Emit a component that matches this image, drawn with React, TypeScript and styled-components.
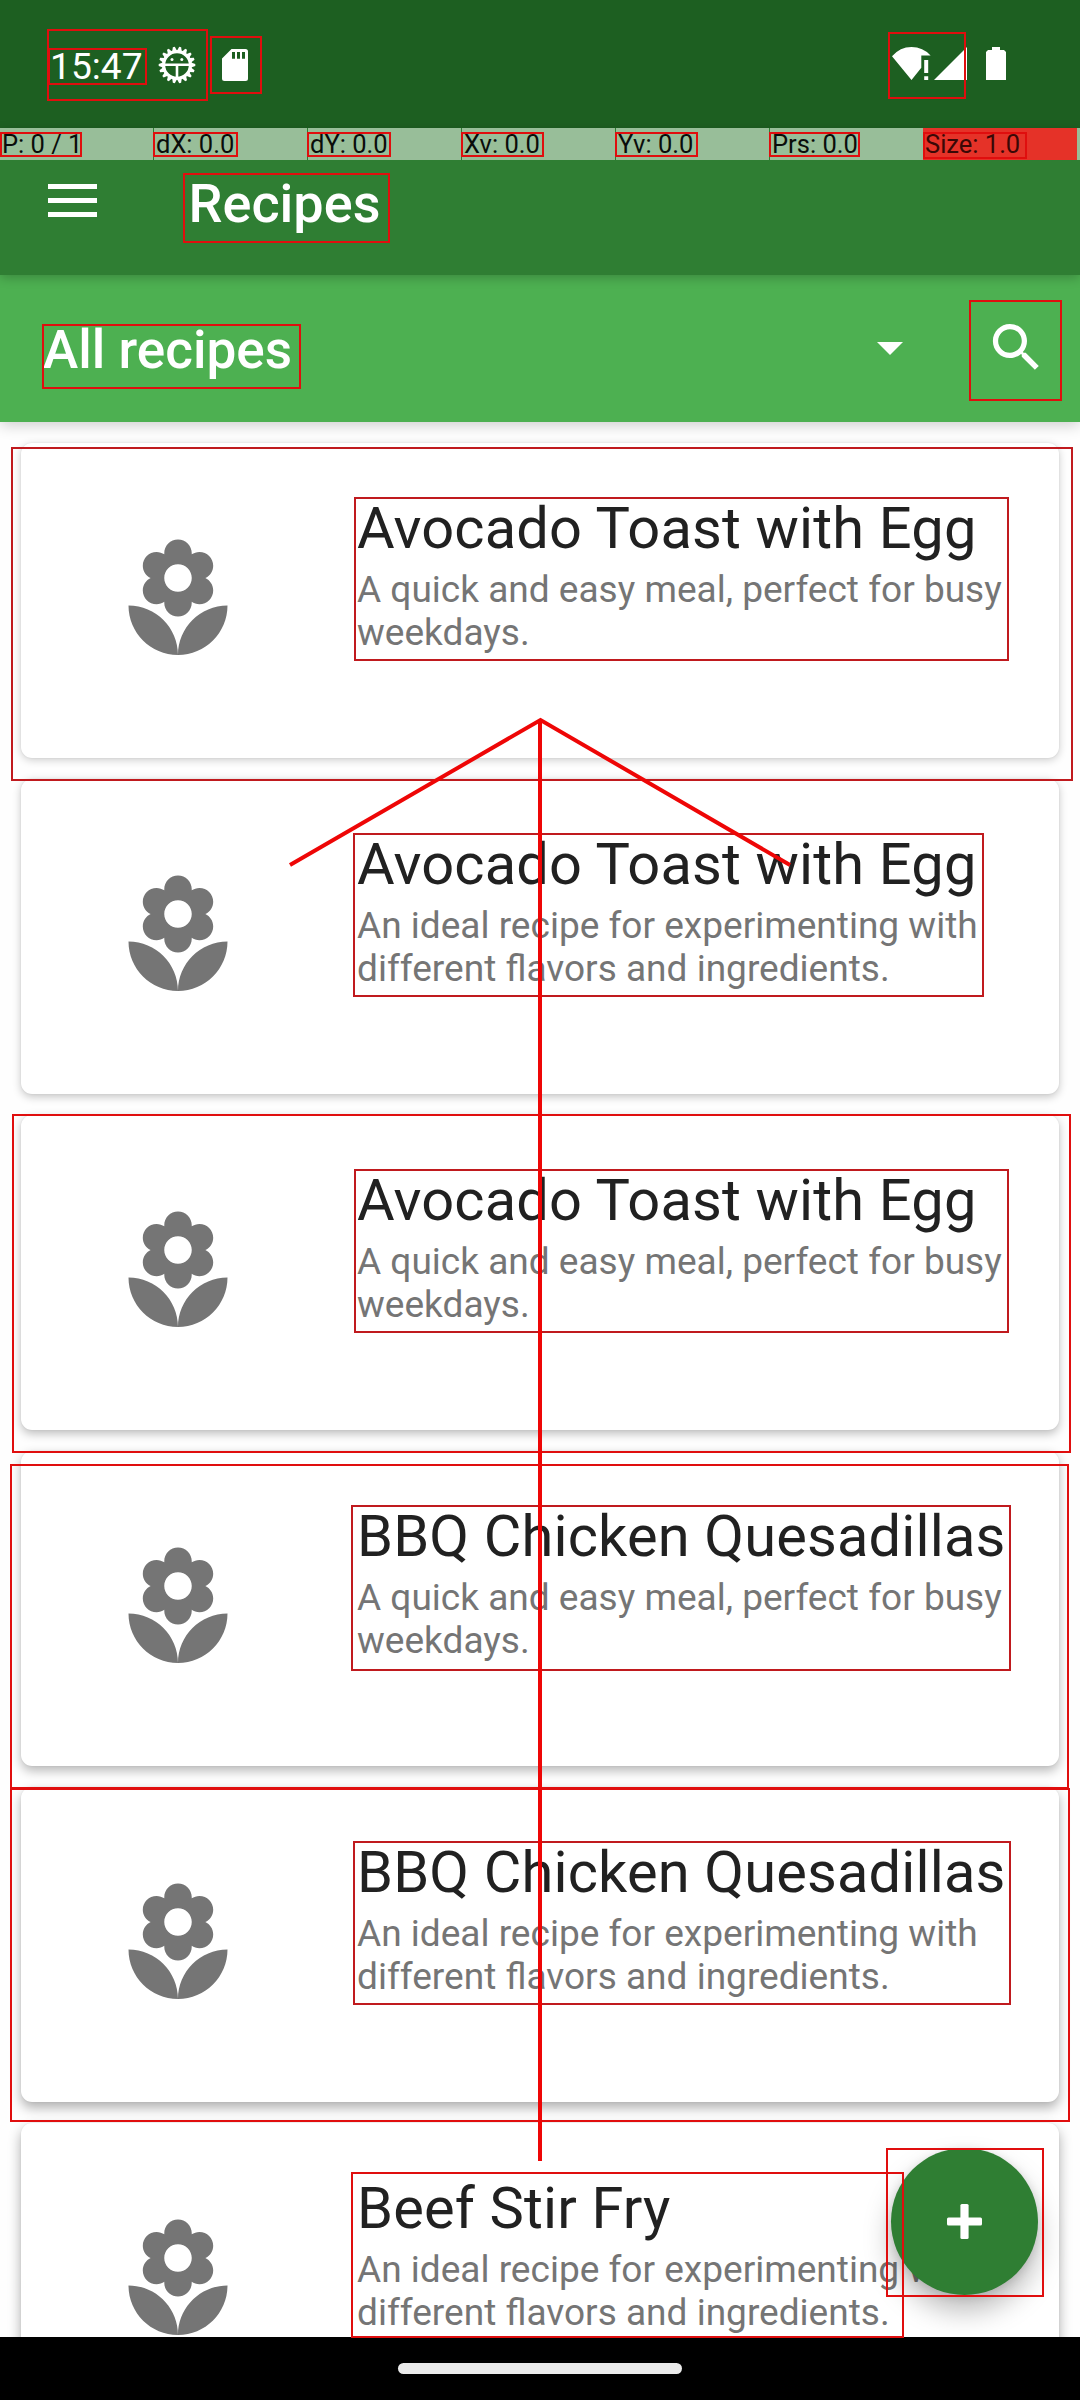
import React from "react";
import styled, { createGlobalStyle } from "styled-components";

const Global = createGlobalStyle`
  * { box-sizing: border-box; }
  html, body { margin: 0; padding: 0; background: #fff; }
  body { font-family: Roboto, "Noto Sans", sans-serif; }
`;

const Screen = styled.div`
  position: relative;
  width: 1080px;
  height: 2400px;
  overflow: hidden;
  display: flex;
  flex-direction: column;
  background: #fefefe;
`;

const StatusBar = styled.header`
  flex: none;
  height: 128px;
  display: flex;
  justify-content: space-between;
  padding: 40px 74px 0 50px;
  background: #1d5f21;
  color: #fff;
`;

const StatusGroup = styled.div`
  display: flex;
  align-items: flex-start;
  height: 50px;
`;

const Clock = styled.span`
  width: 107px;
  padding-top: 1px;
  font-size: 37.2px;
  line-height: 50px;
`;

const AppBar = styled.div`
  position: relative;
  z-index: 3;
  flex: none;
  height: 147px;
  display: flex;
  align-items: center;
  padding: 0 0 3px 39px;
  background: #2f7e33;
  color: #fff;
  box-shadow: 0 3px 10px rgba(0, 0, 0, 0.22);
`;

const AppTitle = styled.h1`
  margin: 7px 0 0 83.5px;
  font-size: 54px;
  font-weight: 500;
  line-height: 62px;
`;

const PointerStrip = styled.div`
  position: absolute;
  left: 0;
  top: 0;
  width: 1080px;
  height: 32px;
  display: flex;
  gap: 1px;
`;

const PointerCell = styled.div<{ $hot?: boolean }>`
  width: ${(p) => (p.$hot ? 154 : 153)}px;
  margin: ${(p) => (p.$hot ? "0 -1px 0 -1px" : "0")};
  padding-left: 2px;
  background: ${(p) => (p.$hot ? "#e53228" : "#98be99")};
  color: ${(p) => (p.$hot ? "#3a0806" : "#0a0d0a")};
  font-size: 25.5px;
  line-height: 32px;
  white-space: nowrap;
`;

const PointerRest = styled.div`
  flex: 1;
  background: #98be99;
`;

const FilterBar = styled.div`
  position: relative;
  z-index: 2;
  flex: none;
  height: 147px;
  display: flex;
  align-items: center;
  padding-left: 43px;
  background: #4db051;
  color: #fff;
  box-shadow: 0 3px 14px rgba(0, 0, 0, 0.2);
`;

const FilterName = styled.div`
  flex: 1;
  margin-top: 2px;
  font-size: 53.1px;
  font-weight: 500;
  line-height: 62px;
`;

const Caret = styled.div`
  width: 26px;
  height: 13px;
  margin-right: 82px;
  background: #fff;
  clip-path: polygon(0 0, 100% 0, 50% 100%);
`;

const SearchButton = styled.button`
  width: 63px;
  height: 63px;
  margin: 0 32px 3px 0;
  padding: 0;
  border: 0;
  background: none;
  color: #fff;
`;

const List = styled.main`
  flex: 1;
  min-height: 0;
  overflow: hidden;
  display: flex;
  flex-direction: column;
  gap: 21px;
  padding: 21px;
`;

const Card = styled.article<{ $depth: number }>`
  flex: none;
  height: 315px;
  display: grid;
  grid-template-columns: 315px 1fr;
  align-items: center;
  border-radius: 11px;
  background: #fff;
  box-shadow:
    0 ${(p) => 2 + p.$depth * 0.8}px ${(p) => 8 + p.$depth}px rgba(0, 0, 0, ${(p) => 0.2 + p.$depth * 0.025}),
    0 0 2px rgba(0, 0, 0, 0.08);
`;

const Thumb = styled.div`
  display: flex;
  justify-content: center;
  padding: 0 1px 1px 0;
  color: #757575;
`;

const CardText = styled.div`
  align-self: start;
  padding: 51px 40px 0 21px;
`;

const CardTitle = styled.h2`
  margin: 0;
  font-size: 57.75px;
  font-weight: 400;
  line-height: 68px;
  letter-spacing: 0.17px;
  color: #212121;
  white-space: nowrap;
`;

const CardNote = styled.p`
  margin: 6px 0 0;
  font-size: 37.04px;
  line-height: 43px;
  color: #757575;
  white-space: pre-line;
`;

const NavBar = styled.footer`
  position: relative;
  z-index: 4;
  flex: none;
  height: 63px;
  display: flex;
  justify-content: center;
  padding-top: 26px;
  background: #000;
`;

const NavHandle = styled.div`
  width: 284px;
  height: 11px;
  border-radius: 6px;
  background: #ebebeb;
`;

const Fab = styled.button`
  position: absolute;
  z-index: 2;
  left: 891px;
  top: 2148px;
  width: 147px;
  height: 147px;
  display: flex;
  align-items: center;
  justify-content: center;
  padding: 0;
  border: 0;
  border-radius: 50%;
  background: #2f7e33;
  color: #fff;
  box-shadow: 0 16px 28px rgba(0, 0, 0, 0.27), 0 2px 10px rgba(0, 0, 0, 0.12);
`;

const Marks = styled.div`
  position: absolute;
  inset: 0;
  z-index: 5;
  pointer-events: none;
`;

const Mark = styled.div<{ $x: number; $y: number; $r: number; $b: number; $deep?: boolean }>`
  position: absolute;
  left: ${(p) => p.$x}px;
  top: ${(p) => p.$y}px;
  width: ${(p) => p.$r - p.$x}px;
  height: ${(p) => p.$b - p.$y}px;
  border: 2px solid ${(p) => (p.$deep ? "#c01a1e" : "#e00e0e")};
`;

const SwipeArrow = styled.svg`
  position: absolute;
  left: 280px;
  top: 700px;
`;

const Spaced = styled.span<{ $left: number; $top: number }>`
  display: block;
  margin: ${(p) => p.$top}px 0 0 ${(p) => p.$left}px;
  line-height: 0;
`;

const Florist = () => (
  <svg width="132" height="132" viewBox="0 0 24 24" fill="currentColor">
    <path d="M12 22c4.97 0 9-4.03 9-9-4.97 0-9 4.03-9 9zM5.6 10.25c0 1.38 1.12 2.5 2.5 2.5.53 0 1.01-.16 1.42-.44l-.02.19c0 1.38 1.12 2.5 2.5 2.5s2.5-1.12 2.5-2.5l-.02-.19c.4.28.89.44 1.42.44 1.38 0 2.5-1.12 2.5-2.5 0-1-.59-1.85-1.43-2.25.84-.4 1.43-1.25 1.43-2.25 0-1.38-1.12-2.5-2.5-2.5-.53 0-1.01.16-1.42.44l.02-.19C14.5 2.12 13.38 1 12 1S9.5 2.12 9.5 3.5l.02.19c-.4-.28-.89-.44-1.42-.44-1.38 0-2.5 1.12-2.5 2.5 0 1 .59 1.85 1.43 2.25-.84.4-1.43 1.25-1.43 2.25zM12 5.5c1.38 0 2.5 1.12 2.5 2.5s-1.12 2.5-2.5 2.5S9.5 9.38 9.5 8s1.12-2.5 2.5-2.5zM3 13c0 4.97 4.03 9 9 9 0-4.97-4.03-9-9-9z" />
  </svg>
);

const TEETH = Array.from({ length: 18 }, (_, i) => i * 20 + 10);

const GearIcon = () => (
  <svg width="38" height="38" viewBox="-19 -19 38 38">
    <g fill="#fff">
      {TEETH.map((a) => (
        <path key={a} d="M-2.4 -14L-1 -18.3H1L2.4 -14z" transform={`rotate(${a})`} />
      ))}
    </g>
    <circle r="13.4" fill="none" stroke="#fff" strokeWidth="3.2" />
    <path d="M-13 -0.2H13M0 0V14" stroke="#fff" strokeWidth="2.6" />
    <circle cx="-5" cy="-5.4" r="1.5" fill="#fff" />
    <circle cx="4.8" cy="-5.4" r="1.5" fill="#fff" />
  </svg>
);

const SdIcon = () => (
  <svg width="26" height="32" viewBox="0 0 26 32">
    <path
      fillRule="evenodd"
      fill="#fff"
      d="M9.5 0H23.5Q26 0 26 2.5V29.5Q26 32 23.5 32H2.5Q0 32 0 29.5V9.5zM10 3V9.7H13V3zM15 3V9.7H18V3zM20 3V9.7H23V3z"
    />
  </svg>
);

const WifiIcon = () => (
  <svg width="39" height="34" viewBox="0 0 39 34" fill="#fff">
    <path d="M0 9.3Q8 0 19.5 0T38.6 8.5H29.3V20.8L19.5 33z" />
    <path d="M32.2 13h4v13h-4zM32.2 29.2h4V33h-4z" />
  </svg>
);

const SignalIcon = () => (
  <svg width="33" height="33" viewBox="0 0 33 33">
    <path d="M33 0V33H0z" fill="#fff" />
  </svg>
);

const BatteryIcon = () => (
  <svg width="20" height="33" viewBox="0 0 20 33">
    <path d="M6 0H14V3H18L20 5V33H0V5L2 3H6z" fill="#fff" />
  </svg>
);

const MenuIcon = () => (
  <svg width="66" height="66" viewBox="0 0 66 66" fill="#fff">
    <path d="M9 17h49v5H9zM9 31h49v5H9zM9 45h49v5H9z" />
  </svg>
);

const recipes = [
  { title: "Avocado Toast with Egg", note: "A quick and easy meal, perfect for busy\nweekdays." },
  { title: "Avocado Toast with Egg", note: "An ideal recipe for experimenting with\ndifferent flavors and ingredients." },
  { title: "Avocado Toast with Egg", note: "A quick and easy meal, perfect for busy\nweekdays." },
  { title: "BBQ Chicken Quesadillas", note: "A quick and easy meal, perfect for busy\nweekdays." },
  { title: "BBQ Chicken Quesadillas", note: "An ideal recipe for experimenting with\ndifferent flavors and ingredients." },
  { title: "Beef Stir Fry", note: "An ideal recipe for experimenting with\ndifferent flavors and ingredients." },
];

const pointer = ["P: 0 / 1", "dX: 0.0", "dY: 0.0", "Xv: 0.0", "Yv: 0.0", "Prs: 0.0"];

/* left, top, right, bottom */
const bright = [
  [47, 29, 208, 101],
  [48, 48, 147, 85],
  [210, 36, 262, 94],
  [888, 32, 966, 99],
  [0, 132, 82, 157],
  [153, 132, 238, 157],
  [307, 132, 391, 157],
  [461, 132, 544, 157],
  [615, 132, 698, 157],
  [769, 132, 860, 157],
  [923, 132, 1027, 159],
  [183, 173, 390, 243],
  [42, 324, 301, 389],
  [969, 300, 1062, 401],
  [12, 1114, 1071, 1453],
  [10, 1464, 1069, 1789],
  [10, 1788, 1070, 2122],
  [351, 2172, 904, 2338],
  [886, 2148, 1044, 2297],
];

const deep = [
  [11, 447, 1073, 781],
  [354, 497, 1009, 661],
  [353, 833, 984, 997],
  [354, 1169, 1009, 1333],
  [351, 1505, 1011, 1671],
  [353, 1841, 1011, 2005],
];

export default function App() {
  return (
    <Screen>
      <Global />
      <StatusBar>
        <StatusGroup>
          <Clock>15:47</Clock>
          <Spaced $left={1} $top={6}><GearIcon /></Spaced>
          <Spaced $left={26} $top={9}><SdIcon /></Spaced>
        </StatusGroup>
        <StatusGroup>
          <Spaced $left={0} $top={7}><WifiIcon /></Spaced>
          <Spaced $left={3} $top={7}><SignalIcon /></Spaced>
          <Spaced $left={19} $top={7}><BatteryIcon /></Spaced>
        </StatusGroup>
      </StatusBar>
      <AppBar>
        <MenuIcon />
        <AppTitle>Recipes</AppTitle>
        <PointerStrip>
          {pointer.map((t) => (
            <PointerCell key={t}>{t}</PointerCell>
          ))}
          <PointerCell $hot>Size: 1.0</PointerCell>
          <PointerRest />
        </PointerStrip>
      </AppBar>
      <FilterBar>
        <FilterName>All recipes</FilterName>
        <Caret />
        <SearchButton aria-label="Search">
          <svg width="63" height="63" viewBox="0 0 24 24" fill="currentColor">
            <path d="M15.5 14h-.79l-.28-.27C15.41 12.59 16 11.11 16 9.5 16 5.91 13.09 3 9.5 3S3 5.91 3 9.5 5.91 16 9.5 16c1.61 0 3.09-.59 4.23-1.57l.27.28v.79l5 4.99L20.49 19l-4.99-5zm-6 0C7.01 14 5 11.99 5 9.5S7.01 5 9.5 5 14 7.01 14 9.5 11.99 14 9.5 14z" />
          </svg>
        </SearchButton>
      </FilterBar>
      <List>
        {recipes.map((r, i) => (
          <Card key={i} $depth={i}>
            <Thumb><Florist /></Thumb>
            <CardText>
              <CardTitle>{r.title}</CardTitle>
              <CardNote>{r.note}</CardNote>
            </CardText>
          </Card>
        ))}
      </List>
      <Fab aria-label="Add">
        <svg width="35" height="35" viewBox="0 0 35 35" fill="currentColor">
          <rect x="13.4" y="0" width="8.2" height="35" rx="1.5" />
          <rect x="0" y="13.4" width="35" height="8.2" rx="1.5" />
        </svg>
      </Fab>
      <NavBar><NavHandle /></NavBar>
      <Marks>
        {bright.map(([x, y, r, b]) => (
          <Mark key={`${x}-${y}`} $x={x} $y={y} $r={r} $b={b} />
        ))}
        {deep.map(([x, y, r, b]) => (
          <Mark key={`${x}-${y}`} $x={x} $y={y} $r={r} $b={b} $deep />
        ))}
        <SwipeArrow width="520" height="1470" viewBox="280 700 520 1470" fill="none" stroke="#ee0606">
          <path d="M540 2161V720" strokeWidth="4" />
          <path d="M290 865L540.5 720L790 865" strokeWidth="4" />
        </SwipeArrow>
      </Marks>
    </Screen>
  );
}
